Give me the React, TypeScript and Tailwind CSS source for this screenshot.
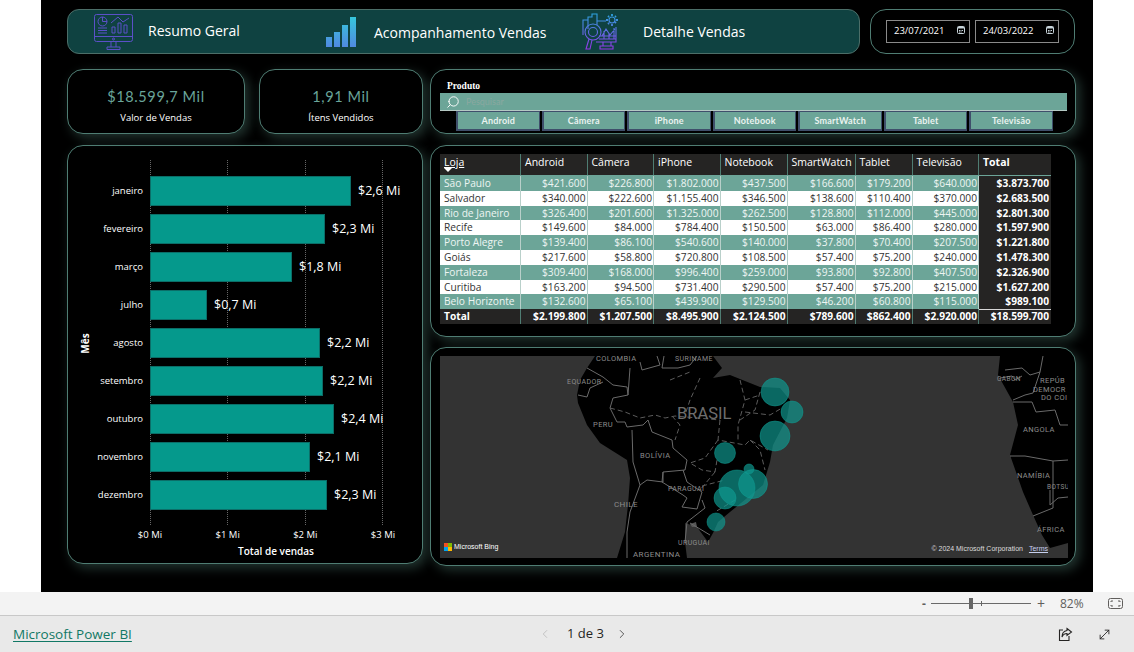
import React from "react";
import { ChevronLeft, ChevronRight, MoveDiagonal, Search } from "lucide-react";

const months = [
  { name: "janeiro", width: 201, label: "$2,6 Mi" },
  { name: "fevereiro", width: 175, label: "$2,3 Mi" },
  { name: "março", width: 142, label: "$1,8 Mi" },
  { name: "julho", width: 57, label: "$0,7 Mi" },
  { name: "agosto", width: 170, label: "$2,2 Mi" },
  { name: "setembro", width: 173, label: "$2,2 Mi" },
  { name: "outubro", width: 184, label: "$2,4 Mi" },
  { name: "novembro", width: 160, label: "$2,1 Mi" },
  { name: "dezembro", width: 177, label: "$2,3 Mi" },
];

const products = ["Android", "Câmera", "iPhone", "Notebook", "SmartWatch", "Tablet", "Televisão"];

const rows = [
  ["São Paulo", "$421.600", "$226.800", "$1.802.000", "$437.500", "$166.600", "$179.200", "$640.000", "$3.873.700"],
  ["Salvador", "$340.000", "$222.600", "$1.155.400", "$346.500", "$138.600", "$110.400", "$370.000", "$2.683.500"],
  ["Rio de Janeiro", "$326.400", "$201.600", "$1.325.000", "$262.500", "$128.800", "$112.000", "$445.000", "$2.801.300"],
  ["Recife", "$149.600", "$84.000", "$784.400", "$150.500", "$63.000", "$86.400", "$280.000", "$1.597.900"],
  ["Porto Alegre", "$139.400", "$86.100", "$540.600", "$140.000", "$37.800", "$70.400", "$207.500", "$1.221.800"],
  ["Goiás", "$217.600", "$58.800", "$720.800", "$108.500", "$57.400", "$75.200", "$240.000", "$1.478.300"],
  ["Fortaleza", "$309.400", "$168.000", "$996.400", "$259.000", "$93.800", "$92.800", "$407.500", "$2.326.900"],
  ["Curitiba", "$163.200", "$94.500", "$731.400", "$290.500", "$57.400", "$75.200", "$215.000", "$1.627.200"],
  ["Belo Horizonte", "$132.600", "$65.100", "$439.900", "$129.500", "$46.200", "$60.800", "$115.000", "$989.100"],
];
const totals = ["Total", "$2.199.800", "$1.207.500", "$8.495.900", "$2.124.500", "$789.600", "$862.400", "$2.920.000", "$18.599.700"];
const headers = ["Loja", "Android", "Câmera", "iPhone", "Notebook", "SmartWatch", "Tablet", "Televisão", "Total"];

const tableCols = "grid grid-cols-[81px_66.5px_66.5px_66.5px_67px_68px_57px_66.5px_72px]";

const cardClass =
  "rounded-[16px] border border-[#4f7d73] bg-black shadow-[4px_4px_12px_rgba(105,165,150,0.32)]";

// bubbles on the map, in page coordinates
const bubbles = [
  [725, 453, 10.5],
  [749, 469, 5],
  [737, 488, 18],
  [753, 484, 14.5],
  [725, 498, 11],
  [716, 522, 9],
  [775, 392, 14],
  [792, 412, 11],
  [775, 436, 15],
];

const mapLabels: [string, number, number, number][] = [
  ["COLÔMBIA", 596, 361, 7.5],
  ["SURINAME", 675, 361, 7],
  ["EQUADOR", 567, 384, 7],
  ["PERU", 593, 427, 7.5],
  ["BOLÍVIA", 640, 458, 7.5],
  ["PARAGUAI", 668, 491, 7],
  ["CHILE", 614, 507, 8],
  ["URUGUAI", 678, 545, 7],
  ["ARGENTINA", 633, 557, 8],
  ["GABON", 997, 381, 6.5],
  ["REPÚB", 1040, 383, 7.5],
  ["DEMOCR", 1033, 392, 7.5],
  ["DO COI", 1041, 400, 7.5],
  ["ANGOLA", 1023, 432, 7.5],
  ["NAMÍBIA", 1017, 478, 7.5],
  ["BOTSU", 1047, 489, 6.5],
  ["ÁFRICA", 1037, 532, 7.5],
];

const borders = [
  "M587 368 L603 377 L613 385 L627 387 L628 395 L613 398 L610 408 L617 422 L625 422 L627 427 L643 425 L648 420 L652 432 L672 440 L673 448 L687 460 L685 470 L663 472 L663 482 L647 480 L640 485 L633 462 L632 430",
  "M578 395 L587 397 L590 388 L603 382",
  "M640 485 L630 512 L627 532 L627 558",
  "M663 472 L662 482 L683 495 L687 498 L682 507 L697 509 L702 492 L687 482 L683 470",
  "M702 500 L705 508 L687 522 L685 542",
  "M690 523 L710 535",
  "M640 362 L642 370 L660 365 L657 356",
  "M630 368 L628 395",
  "M664 356 L662 368 L678 368 L690 365 L697 356",
  "M1005 370 L1022 368 L1030 375 L1040 372 L1043 356",
  "M1000 378 L1012 376 L1015 380 L1022 376",
  "M1013 400 L1025 395 L1033 393 L1040 372",
  "M1013 402 L1032 402 L1036 412 L1055 410 L1060 425 L1068 425",
  "M1010 456 L1025 456 L1053 461 L1068 460",
  "M1053 461 L1053 508 L1033 516",
  "M1050 490 L1050 505 L1058 498 L1068 497",
];

const dashedBorders = [
  "M610 408 L625 412 L640 418 L655 415 L665 418 L675 416 L720 420",
  "M672 416 L680 425 L675 440",
  "M720 420 L718 440 L745 445 L750 440 L768 450",
  "M718 440 L705 458 L690 463 L702 470 L715 472 L717 460",
  "M715 472 L700 490 M702 486 L725 480",
  "M670 380 L690 372 M700 378 L690 400 L685 415",
  "M740 380 L745 400 L738 425 L738 440 M760 392 L755 410 L740 420",
  "M745 412 L770 415 L782 408 M750 440 L760 450 L765 470",
  "M745 400 L760 395 M735 500 L715 512",
];

function MonitorIcon() {
  return (
    <svg width="40" height="36" viewBox="0 0 40 36" fill="none" stroke="#5b50c8" strokeWidth="1">
      <rect x="0.5" y="0.5" width="38" height="27" rx="2" />
      <path d="M0.5 22.5H38.5M13 35.5H26M13 35.5V33H26V35.5M17 33V27.5M22 33V27.5" />
      <circle cx="19.5" cy="25" r="1" />
      <circle cx="8.5" cy="7.5" r="4.5" />
      <path d="M8.5 3V7.5H13M4 14H13M4 16.5H13M4 19H13" />
      <path d="M18 19V13H21V19ZM24 19V9H27V19ZM30 19V11H33V19Z" />
      <path d="M17 9L24 3L29 8L35 4" />
    </svg>
  );
}

function BarsIcon() {
  return (
    <svg width="30" height="30" viewBox="0 0 30 30">
      <defs>
        <linearGradient id="barsFill" x1="0" y1="0" x2="0" y2="1">
          <stop offset="0" stopColor="#36c7dc" />
          <stop offset="1" stopColor="#5089e0" />
        </linearGradient>
      </defs>
      <path d="M0 20H6V30H0ZM8 15H14V30H8ZM16 8H22V30H16ZM24 0H30V30H24Z" fill="url(#barsFill)" />
    </svg>
  );
}

function DetailIcon() {
  return (
    <svg width="38" height="38" viewBox="0 0 38 38" fill="none" stroke="url(#detailStroke)" strokeWidth="1.1">
      <defs>
        <linearGradient id="detailStroke" gradientUnits="userSpaceOnUse" x1="0" y1="0" x2="0" y2="38">
          <stop offset="0" stopColor="#2aa7e0" />
          <stop offset="1" stopColor="#9b2fe8" />
        </linearGradient>
      </defs>
      <path d="M1 22V7H6V16M6 12V4H10V1H15V12M15 8H24" />
      <circle cx="30" cy="7" r="3" />
      <path d="M30 1V3M30 11V13M24 7H26M34 7H36M26 3L27 4M34 10L33 9M34 3L33 4M26 11L27 10" strokeWidth="1.8" />
      <circle cx="11" cy="19" r="8" />
      <circle cx="11" cy="19" r="4.5" />
      <path d="M7 26L4 36H8L10 27" />
      <path d="M20 23L24 16L28 22L33 16M22 26V18M27 26V20M32 26V15" />
      <path d="M34 14V26H17M34 23H17M34 26V29H14M21 29V33M29 29V33M18 36V33H31V36Z" />
    </svg>
  );
}

function CalendarIcon() {
  return (
    <svg width="8" height="8" viewBox="0 0 8 8" className="shrink-0">
      <rect x="0.5" y="0.5" width="7" height="7" rx="1" fill="none" stroke="#c8d4da" />
      <rect x="1" y="1" width="6" height="1.5" fill="#c8d4da" />
      <path d="M2 4H3V5H2ZM3.5 4H4.5V5H3.5ZM5 4H6V5H5ZM2 5.5H3V6.5H2ZM3.5 5.5H4.5V6.5H3.5Z" fill="#c8d4da" />
    </svg>
  );
}

function DateBox({ value }: { value: string }) {
  return (
    <div className="flex h-[23px] w-[84px] items-center justify-between border border-[#8a8a8a] pl-[7px] pr-[4px] pb-[1px] font-['Open_Sans',sans-serif] text-[9.5px] text-white">
      <span>{value}</span>
      <span className="-mt-[3px]">
        <CalendarIcon />
      </span>
    </div>
  );
}

function Kpi({ value, label, width }: { value: string; label: string; width: string }) {
  return (
    <div className={`${cardClass} ${width} flex h-full flex-col items-center pt-[17px]`}>
      <div className="font-['Lato',sans-serif] text-[14.5px] leading-[20px] tracking-[0.6px] text-[#6aa59a]">{value}</div>
      <div className="mt-[4px] font-['Open_Sans',sans-serif] text-[9.5px] leading-[14px] text-white">{label}</div>
    </div>
  );
}

function SalesChart() {
  return (
    <div className={`${cardClass} mt-[11px] h-[419px] pt-[30px]`}>
      <div className="flex h-[334px]">
        <div className="flex w-[35px] items-center justify-center">
          <span className="-rotate-90 font-['Open_Sans',sans-serif] text-[10px] font-bold text-white">Mês</span>
        </div>
        <div className="relative flex flex-1 flex-col gap-[8px]">
          <div className="absolute -top-[16px] -bottom-[15px] left-[47px] flex w-[233px] justify-between">
            <div className="border-l border-dotted border-[#666]" />
            <div className="border-l border-dotted border-[#666]" />
            <div className="border-l border-dotted border-[#666]" />
            <div className="border-l border-dotted border-[#666]" />
          </div>
          {months.map((m) => (
            <div key={m.name} className="relative flex h-[30px] items-center">
              <div className="w-[40px] whitespace-nowrap text-right font-['Open_Sans',sans-serif] text-[9.5px] text-white [direction:rtl]">
                {m.name}
              </div>
              <div
                className="ml-[7px] h-[30px] border border-[#0b6e68] bg-[#05998c]"
                style={{ width: m.width }}
              />
              <div className="ml-[7px] font-['Open_Sans',sans-serif] text-[12.5px] text-white">{m.label}</div>
            </div>
          ))}
        </div>
      </div>
      <div className="ml-[82px] mt-[19px] flex w-[233px] justify-between">
        {["$0 Mi", "$1 Mi", "$2 Mi", "$3 Mi"].map((t) => (
          <div key={t} className="flex w-0 justify-center whitespace-nowrap font-['Open_Sans',sans-serif] text-[9.5px] leading-[12px] text-white">
            {t}
          </div>
        ))}
      </div>
      <div className="ml-[82px] mt-[3px] w-[252px] text-center font-['Open_Sans',sans-serif] text-[10px] font-semibold leading-[14px] text-white">
        Total de vendas
      </div>
    </div>
  );
}

function ProductSlicer() {
  return (
    <div className={`${cardClass} h-[65px] pl-[9px] pr-[8px] pt-[10px]`}>
      <div className="pl-[7px] font-['Liberation_Serif',serif] text-[9.5px] font-bold leading-[13px] text-white">Produto</div>
      <div className="flex h-[18px] items-center gap-[6px] border-b border-[#b5c9c4] bg-[#6ca598] pl-[6px] font-['Lato',sans-serif] text-[9px] text-[#8aa8a0]">
        <Search size={14} strokeWidth={1.6} color="#fff" className="-scale-x-100" />
        Pesquisar
      </div>
      <div className="flex gap-[2px] pl-[16px]">
        {products.map((p) => (
          <div
            key={p}
            className="flex h-[20px] w-[83.5px] items-center justify-center border-b-2 border-l-2 border-r-[1px] border-t border-[#3f4f6b] bg-[#6ca598] font-['Lato',sans-serif] text-[9px] font-bold tracking-[0.2px] text-[#eaf3f0]"
          >
            {p}
          </div>
        ))}
      </div>
    </div>
  );
}

function SalesTable() {
  return (
    <div className={`${cardClass} mt-[11px] h-[192px] pl-[9px] pt-[8px] font-['Open_Sans',sans-serif] text-[10.2px]`}>
      <div className={`${tableCols} h-[21px] w-[611px] bg-[#252423] text-[10.5px] leading-[14px] text-white`}>
        {headers.map((h, i) => (
          <div
            key={h}
            className={`relative pl-[4px] pt-[1px] ${i < 8 ? "border-r border-[#4f7d73]" : "font-bold"}`}
          >
            {i === 0 ? <span className="underline underline-offset-1">{h}</span> : h}
            {i === 0 && (
              <span className="absolute left-[4px] top-[14px] h-0 w-0 border-x-[4px] border-t-[4px] border-x-transparent border-t-white" />
            )}
          </div>
        ))}
      </div>
      <div className="w-[611px] border-t border-[#6ca598]">
        {rows.map((row, r) => (
          <div
            key={row[0]}
            className={`${tableCols} h-[14.8px] leading-[14.8px] ${r % 2 === 0 ? "bg-[#6ca598] text-[#eef5f3]" : "bg-white text-[#333]"}`}
          >
            {row.map((cell, i) => (
              <div
                key={i}
                className={
                  i === 0
                    ? "border-r border-[#b9d0ca] pl-[4px] whitespace-nowrap"
                    : i === 8
                      ? "border-b border-[#d8d8d8] bg-[#252423] pr-[2px] text-right font-bold text-white"
                      : "border-r border-[#b9d0ca] pr-[1px] text-right"
                }
              >
                {cell}
              </div>
            ))}
          </div>
        ))}
        <div className={`${tableCols} h-[14.5px] bg-[#252423] font-bold leading-[14.5px] text-white`}>
          {totals.map((cell, i) => (
            <div key={i} className={i === 0 ? "border-r border-[#4f7d73] pl-[4px]" : i === 8 ? "pr-[2px] text-right" : "border-r border-[#4f7d73] pr-[1px] text-right"}>
              {cell}
            </div>
          ))}
        </div>
      </div>
    </div>
  );
}

function MapPanel() {
  return (
    <div className={`${cardClass} mt-[10px] h-[219px] pl-[9px] pr-[7px] pt-[8px]`}>
      <div className="relative h-[202px] w-[628px] overflow-hidden bg-[#333333]">
        <svg width="628" height="202" viewBox="440 356 628 202" className="block">
          <path
            d="M595 356 L587 368 L580 380 L577 395 L578 403 L587 425 L600 443 L627 460 L630 478 L628 505 L625 532 L617 558 L687 558 L685 542 L685 523 L697 527 L708 542 L713 533 L718 522 L730 512 L763 485 L770 462 L773 445 L787 418 L790 400 L780 388 L760 387 L730 375 L713 378 L722 368 L713 356 Z"
            fill="#000"
          />
          <path
            d="M1000 356 L998 375 L1013 402 L1018 425 L1010 455 L1023 492 L1033 515 L1042 535 L1050 548 L1068 543 L1068 356 Z"
            fill="#000"
          />
          <path d="M690 524 L696 522 L697 527 L692 527 Z" fill="#555" />
          <g fill="none" stroke="#6a6a6a" strokeWidth="1">
            {borders.map((d) => (
              <path key={d} d={d} />
            ))}
            <g strokeDasharray="5 3" stroke="#5c5c5c">
              {dashedBorders.map((d) => (
                <path key={d} d={d} />
              ))}
            </g>
          </g>
          <text x="677" y="419" fontSize="16.5" fill="#6e6e6e" fontFamily="Roboto, sans-serif">BRASIL</text>
          {mapLabels.map(([name, x, y, size]) => (
            <text key={name} x={x} y={y} fontSize={size} letterSpacing="0.4" fill="#8c8c8c" fontFamily="Roboto, sans-serif">
              {name}
            </text>
          ))}
          <g>
            {bubbles.map(([cx, cy, r]) => (
              <circle key={`${cx}-${cy}`} cx={cx} cy={cy} r={r} fill="#0f9a90" fillOpacity="0.68" stroke="#0f9a90" strokeOpacity="0.5" />
            ))}
          </g>
        </svg>
        <div className="absolute bottom-[6px] left-[4px] flex items-center gap-[2px] font-['Liberation_Sans',sans-serif] text-[7px] text-white">
          <div className="grid h-[8px] w-[8px] grid-cols-2">
            <span className="bg-[#f25022]" />
            <span className="bg-[#7fba00]" />
            <span className="bg-[#00a4ef]" />
            <span className="bg-[#ffb900]" />
          </div>
          Microsoft Bing
        </div>
        <div className="absolute bottom-[4px] right-[20px] flex gap-[6px] font-['Liberation_Sans',sans-serif] text-[7px] text-[#ddd]">
          <span>© 2024 Microsoft Corporation</span>
          <span className="text-[#c8d0ee] underline">Terms</span>
        </div>
      </div>
    </div>
  );
}

export default function App() {
  return (
    <div className="flex h-[652px] w-[1134px] flex-col overflow-hidden bg-white">
      <div className="mx-[41px] h-[592px] bg-black pl-[26px] pt-[9px]">
        <div className="flex h-[45px] gap-[10px]">
          <div className="flex h-[45px] w-[793px] items-center rounded-[12px] border border-[#4c6e68] bg-[#0f4241] text-white font-['Open_Sans',sans-serif] text-[14px]">
            <div className="ml-[26px] w-[40px]">
              <MonitorIcon />
            </div>
            <div className="ml-[14px] -mt-[3px] w-[178px]">Resumo Geral</div>
            <div className="mt-[1px] w-[30px]">
              <BarsIcon />
            </div>
            <div className="ml-[18px] mt-[1px] w-[208px] whitespace-nowrap">Acompanhamento Vendas</div>
            <div className="w-[38px]">
              <DetailIcon />
            </div>
            <div className="ml-[23px] -mt-[1px]">Detalhe Vendas</div>
          </div>
          <div className={`${cardClass} flex h-[45px] w-[205px] items-center gap-[5px] pl-[15px] shadow-none`}>
            <DateBox value="23/07/2021" />
            <DateBox value="24/03/2022" />
          </div>
        </div>

        <div className="mt-[15px] flex gap-[7px]">
          <div className="w-[356px]">
            <div className="flex h-[65px] gap-[14px]">
              <Kpi value="$18.599,7 Mil" label="Valor de Vendas" width="w-[178px]" />
              <Kpi value="1,91 Mil" label="Ítens Vendidos" width="w-[164px]" />
            </div>
            <SalesChart />
          </div>
          <div className="w-[646px]">
            <ProductSlicer />
            <SalesTable />
            <MapPanel />
          </div>
        </div>
      </div>

      <div className="flex h-[23px] items-center bg-[#f3f3f3] pl-[922px] font-['Open_Sans',sans-serif] text-[#605e5c]">
        <span className="w-[9px] text-[12px] font-bold leading-none">-</span>
        <div className="relative h-px w-[100px] bg-[#6a6a6a]">
          <span className="absolute left-[38px] -top-[5px] h-[11px] w-[4px] bg-[#666]" />
          <span className="absolute left-[50px] -top-[2px] h-[5px] w-px bg-[#666]" />
        </div>
        <span className="ml-[6px] w-[12px] text-[14px] leading-none">+</span>
        <span className="ml-[11px] text-[12px]">82%</span>
        <svg width="15" height="11" viewBox="0 0 15 11" fill="none" stroke="#605e5c" className="ml-[24px]">
          <rect x="0.5" y="0.5" width="14" height="10" rx="2" />
          <path d="M3 4V3H5M10 3H12V4M3 7V8H5M10 8H12V7" />
        </svg>
      </div>
      <div className="flex h-[37px] items-center border-t border-[#c8c8c8] bg-[#e9e9e9] font-['Open_Sans',sans-serif]">
        <a className="ml-[13px] w-[525px] text-[13.5px] text-[#117865] underline underline-offset-2">Microsoft Power BI</a>
        <ChevronLeft size={14} color="#bdbdbd" strokeWidth={1.5} />
        <span className="ml-[15px] w-[48px] text-[13px] text-[#252423]">1 de 3</span>
        <ChevronRight size={14} color="#444" strokeWidth={1.5} />
        <svg width="15" height="15" viewBox="0 0 15 15" fill="none" stroke="#252423" strokeWidth="1.1" className="ml-[429px]">
          <path d="M5 3H1.5V13.5H11V9" />
          <path d="M9 1.5L13.5 5L9 8.5V6.5C6.5 6.5 5 7.5 4 10C4 6.5 6 4 9 3.5Z" />
        </svg>
        <MoveDiagonal size={15} strokeWidth={1.4} color="#252423" className="ml-[24px]" />
      </div>
    </div>
  );
}
